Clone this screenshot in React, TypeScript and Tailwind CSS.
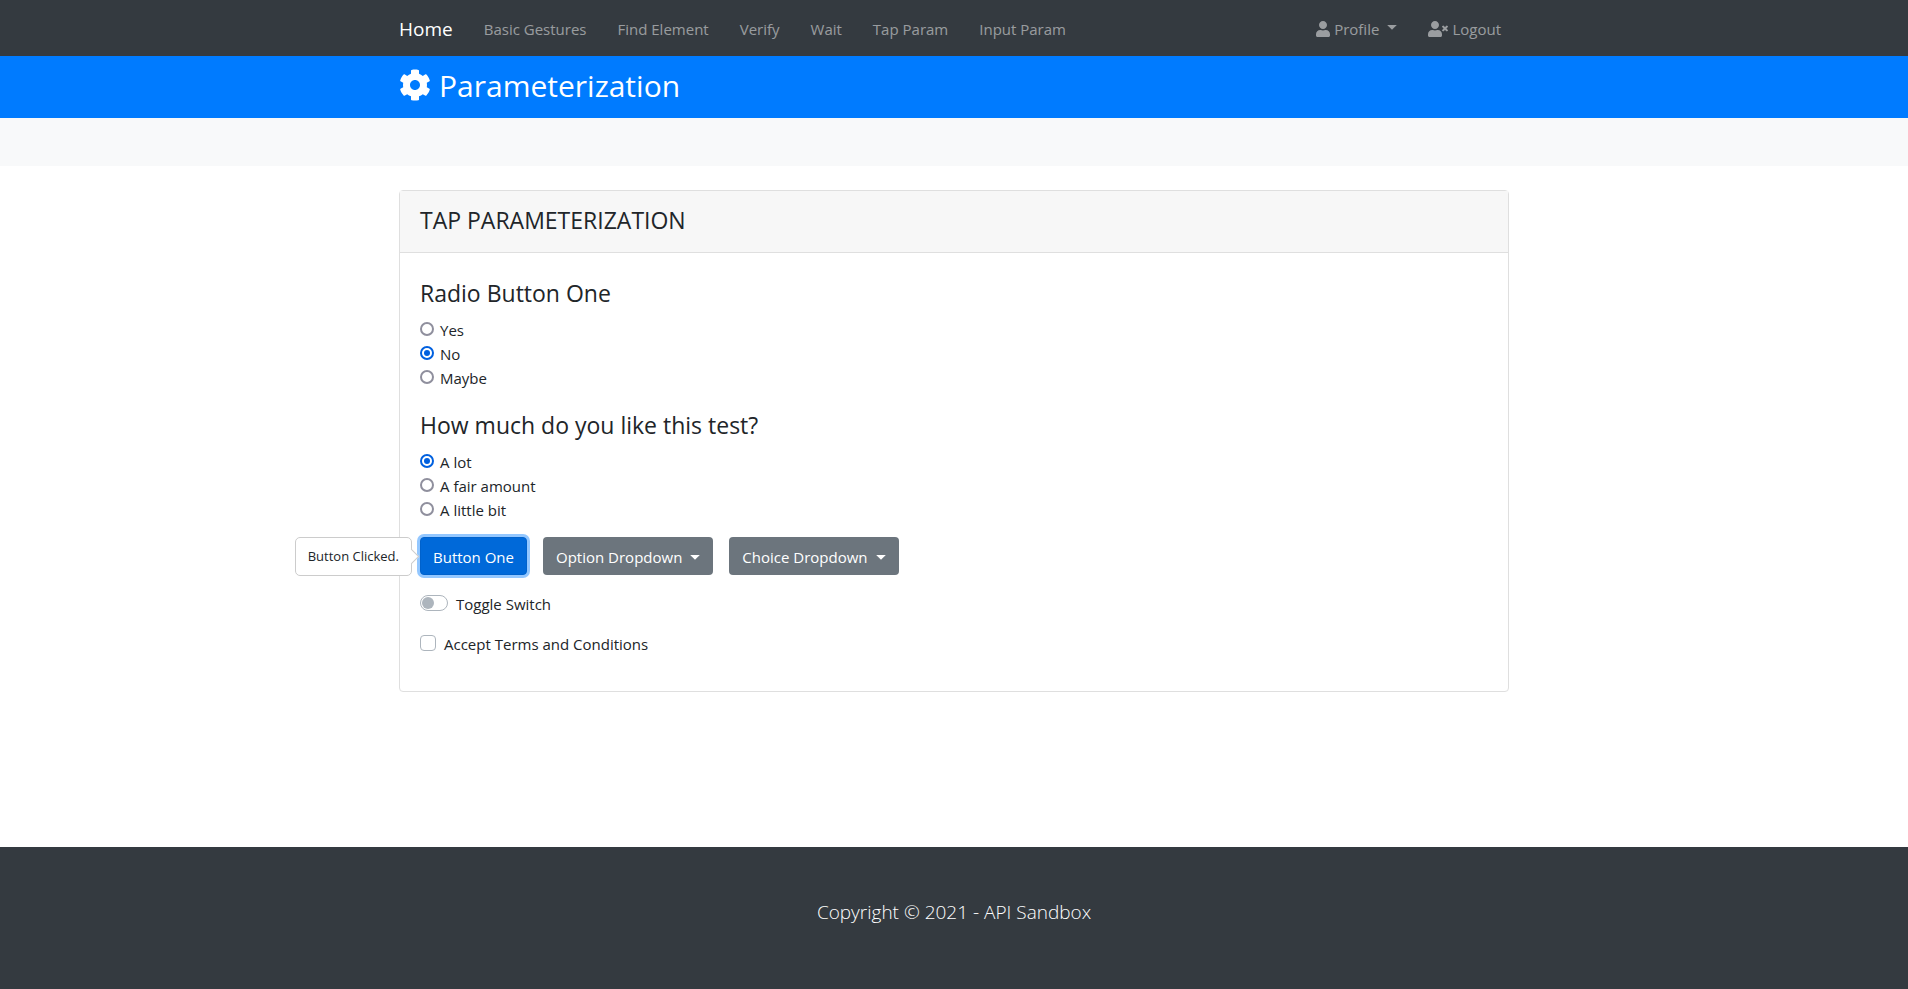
import { useState, type ReactNode } from "react";
import { FaCog, FaUser, FaUserTimes } from "react-icons/fa";

const links = ["Basic Gestures", "Find Element", "Verify", "Wait", "Tap Param", "Input Param"];

function Caret() {
  return (
    <svg viewBox="0 0 10 5" className="h-[5px] w-[10px] fill-current" aria-hidden="true">
      <path d="M0.2 0h9.6L5 4.8z" />
    </svg>
  );
}

function Container({ children, className = "" }: { children: ReactNode; className?: string }) {
  return <div className={`mx-auto w-full max-w-[1140px] px-[15px] ${className}`}>{children}</div>;
}

function RadioGroup({ title, name, options, initial }: { title: string; name: string; options: string[]; initial: string }) {
  const [value, setValue] = useState(initial);
  return (
    <fieldset>
      <legend className="mb-2.5 text-[23px] leading-[30px]">{title}</legend>
      {options.map((option) => (
        <label key={option} className="flex h-6 gap-1.5 leading-6">
          <input
            type="radio"
            name={name}
            checked={value === option}
            onChange={() => setValue(option)}
            className="mt-1 size-3.5 appearance-none rounded-full border-2 border-[#8f8f9d] bg-white bg-clip-content p-0.5 checked:border-[#0060df] checked:bg-[#0060df]"
          />
          {option}
        </label>
      ))}
    </fieldset>
  );
}

function DropdownButton({ children }: { children: ReactNode }) {
  return (
    <button
      type="button"
      aria-haspopup="menu"
      className="flex h-[38px] items-center gap-2 rounded-sm bg-[#6c757d] px-[13px] pt-0.5 text-white"
    >
      {children}
      <Caret />
    </button>
  );
}

export default function App() {
  const [toggled, setToggled] = useState(false);
  const [accepted, setAccepted] = useState(false);
  return (
    <div className="flex min-h-screen flex-col bg-white font-['Open_Sans',sans-serif] text-[15px] text-[#212529]">
      <nav className="bg-[#343a40] text-white/50">
        <Container className="flex h-14 items-center justify-between pt-0.5">
          <div className="flex items-center gap-[31px]">
            <a href="#home" className="text-[19px] text-white">Home</a>
            {links.map((link) => (
              <a key={link} href="#page">{link}</a>
            ))}
          </div>
          <div className="flex items-center gap-[31px] pr-2">
            <a href="#profile" className="flex items-center gap-1">
              <FaUser className="h-4 w-3.5" />
              Profile
              <span className="mb-1 ml-1"><Caret /></span>
            </a>
            <a href="#logout" className="flex items-center gap-1">
              <FaUserTimes className="h-4 w-5" />
              Logout
            </a>
          </div>
        </Container>
      </nav>

      <header className="bg-[#007bff] text-white">
        <Container className="flex h-[62px] items-start gap-2 pt-2.5">
          <FaCog className="mt-[3px] size-8" />
          <h1 className="text-[30px] leading-10">Parameterization</h1>
        </Container>
      </header>

      <div className="h-12 bg-[#f8f9fa]" />

      <main className="pt-6 pb-12">
        <Container>
          <section className="rounded-sm border border-[#dfdfdf]">
            <div className="border-b border-[#dfdfdf] bg-[#f7f7f7] px-5 pt-3.5 pb-[17px]">
              <h2 className="text-[23px] leading-[30px]">TAP PARAMETERIZATION</h2>
            </div>
            <div className="px-5 pt-[25px] pb-[35px]">
              <div className="flex flex-col gap-5">
                <RadioGroup title="Radio Button One" name="one" options={["Yes", "No", "Maybe"]} initial="No" />
                <RadioGroup
                  title="How much do you like this test?"
                  name="like"
                  options={["A lot", "A fair amount", "A little bit"]}
                  initial="A lot"
                />
              </div>
              <div className="mt-[15px] flex gap-4">
                <div className="relative">
                  <button
                    type="button"
                    className="h-[38px] rounded-sm border border-[#0062cc] bg-[#0069d9] px-3 pt-0.5 text-white ring-3 ring-[#93c7ff]"
                  >
                    Button One
                  </button>
                  <div
                    role="tooltip"
                    className="absolute top-0 right-full mr-2 flex h-[39px] items-center rounded-[5px] border border-[#cccccc] bg-white px-3 text-[13px] whitespace-nowrap"
                  >
                    Button Clicked.
                    <span className="absolute top-[13px] -right-1.5 size-[11px] rotate-45 border-t border-r border-[#cccccc] bg-white" />
                  </div>
                </div>
                <DropdownButton>Option Dropdown</DropdownButton>
                <DropdownButton>Choice Dropdown</DropdownButton>
              </div>
              <label className="mt-[17px] flex h-6 w-fit gap-2 leading-6">
                <input
                  type="checkbox"
                  role="switch"
                  checked={toggled}
                  onChange={() => setToggled(!toggled)}
                  className="mt-[3px] h-4 w-7 appearance-none rounded-full border border-[#adb5bd] bg-white p-px before:block before:size-3 before:rounded-full before:bg-[#adb5bd] checked:bg-[#007bff] checked:before:translate-x-3 checked:before:bg-white"
                />
                Toggle Switch
              </label>
              <label className="mt-4 flex h-6 w-fit gap-2 leading-6">
                <input
                  type="checkbox"
                  checked={accepted}
                  onChange={() => setAccepted(!accepted)}
                  className="mt-[3px] size-4 appearance-none rounded-sm border border-[#adb5bd] bg-white checked:bg-[#007bff]"
                />
                Accept Terms and Conditions
              </label>
            </div>
          </section>
        </Container>
      </main>

      <footer className="mt-auto bg-[#343a40] pt-[50px] pb-[62px] text-center text-[19px] leading-[30px] font-light text-white">
        <p>Copyright © 2021 - API Sandbox</p>
      </footer>
    </div>
  );
}
